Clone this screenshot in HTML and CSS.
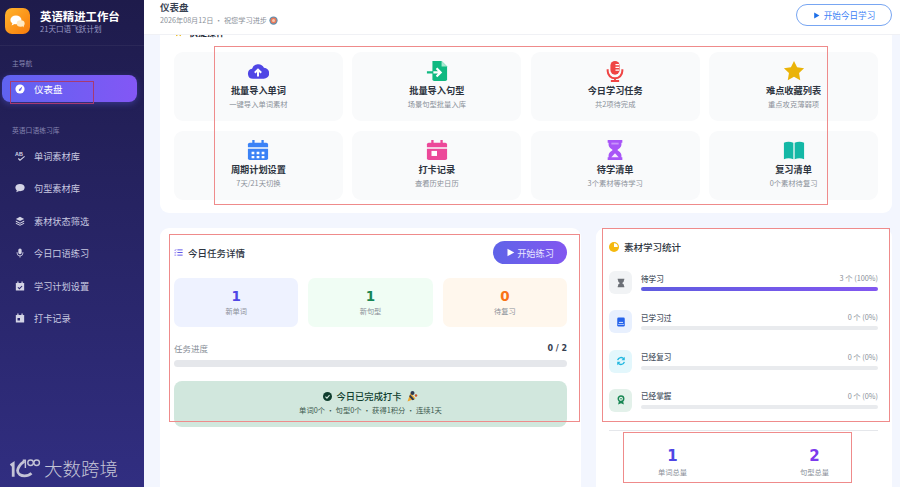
FILE: index.html
```html
<!DOCTYPE html>
<html lang="zh-CN">
<head>
<meta charset="utf-8">
<title>英语精进工作台</title>
<link rel="stylesheet" href="styles.css">
</head>
<body>
<aside class="sidebar">
  <div class="brand">
    <div class="logo">
      <svg viewBox="0 0 24 24" class="logo-svg"><ellipse cx="10" cy="10" rx="7" ry="5.6" fill="#fff"/><path d="M6 13l-1.500 4 5-2.500z" fill="#fff"/><ellipse cx="16" cy="14.500" rx="5" ry="4" fill="#ffe9c4"/><path d="M18 17l2 2.500-.2-4z" fill="#ffe9c4"/></svg>
    </div>
    <div class="brand-text">
      <div class="brand-title">英语精进工作台</div>
      <div class="brand-sub">21天口语飞跃计划</div>
    </div>
  </div>
  <div class="nav-label first">主导航</div>
  <a class="nav-item active">
    <svg viewBox="0 0 24 24" class="nav-icon"><circle cx="12" cy="12" r="11" fill="#fff"/><path d="M17.500 6l-3 9-4-3z" fill="#6a60f2"/><circle cx="11.500" cy="14.500" r="2.300" fill="#6a60f2"/></svg>
    <span>仪表盘</span>
  </a>
  <div class="nav-label second">英语口语练习库</div>
  <nav class="nav-list">
    <a class="nav-item">
      <svg viewBox="0 0 24 24" class="nav-icon"><text x="0" y="11" class="ab-text">AB</text><path d="M8 18l4 4 11-9" fill="none" stroke="currentColor" stroke-width="2.600"/></svg>
      <span>单词素材库</span>
    </a>
    <a class="nav-item">
      <svg viewBox="0 0 24 24" class="nav-icon"><ellipse cx="12" cy="11" rx="11" ry="8.500" fill="currentColor"/><path d="M5 16l-2 6 7-3z" fill="currentColor"/></svg>
      <span>句型素材库</span>
    </a>
    <a class="nav-item">
      <svg viewBox="0 0 24 24" class="nav-icon"><path d="M12 2l10 5-10 5L2 7z" fill="currentColor"/><path d="M2 11l10 5 10-5v2.500l-10 5-10-5z" fill="currentColor"/><path d="M2 16l10 5 10-5v2.500l-10 5-10-5z" fill="currentColor"/></svg>
      <span>素材状态筛选</span>
    </a>
    <a class="nav-item">
      <svg viewBox="0 0 24 24" class="nav-icon"><rect x="8" y="1" width="8" height="14" rx="4" fill="currentColor"/><path d="M5 10v2a7 7 0 0 0 14 0v-2M12 19v4" fill="none" stroke="currentColor" stroke-width="2"/></svg>
      <span>今日口语练习</span>
    </a>
    <a class="nav-item">
      <svg viewBox="0 0 24 24" class="nav-icon"><path d="M3 5h18a1 1 0 0 1 1 1v16a1 1 0 0 1-1 1H3a1 1 0 0 1-1-1V6a1 1 0 0 1 1-1z" fill="currentColor"/><path d="M7 1v6M17 1v6" stroke="currentColor" stroke-width="3"/><path d="M7 15l3.500 3.500L17 12" fill="none" stroke="#2a2570" stroke-width="2.500"/></svg>
      <span>学习计划设置</span>
    </a>
    <a class="nav-item">
      <svg viewBox="0 0 24 24" class="nav-icon"><path d="M3 5h18a1 1 0 0 1 1 1v16a1 1 0 0 1-1 1H3a1 1 0 0 1-1-1V6a1 1 0 0 1 1-1z" fill="currentColor"/><path d="M7 1v6M17 1v6" stroke="currentColor" stroke-width="3"/><rect x="6" y="12" width="6" height="6" fill="#2a2570"/></svg>
      <span>打卡记录</span>
    </a>
  </nav>
</aside>

<div class="main">
  <header class="topbar">
    <div>
      <div class="page-title">仪表盘</div>
      <div class="page-sub">2026年08月12日 · 祝您学习进步
        <svg viewBox="0 0 24 24" class="target"><circle cx="12" cy="12" r="11" fill="#5b8fb0"/><circle cx="12" cy="12" r="8" fill="#e8795a"/><circle cx="12" cy="12" r="4" fill="#f3c9b0"/></svg>
      </div>
    </div>
    <button class="btn-outline"><svg viewBox="0 0 24 24" class="btn-play"><path d="M4 2l18 10L4 22z" fill="currentColor"/></svg>开始今日学习</button>
  </header>

  <div class="content">
    <section class="card quick">
      <div class="quick-head">
        <svg viewBox="0 0 24 24" class="quick-star"><path d="M12 1l3.400 7 7.600 1-5.500 5.300 1.300 7.700-6.800-3.700L5.200 22l1.300-7.700L1 9l7.600-1z" fill="#eab308"/></svg>
        <span>快捷操作</span>
      </div>
      <div class="tiles">
        <div class="tile">
          <svg viewBox="0 0 24 24" class="tile-icon"><path d="M6.500 20.500a5.500 5.500 0 0 1-1-10.900A7 7 0 0 1 18.500 8.500 6 6 0 0 1 18 20.500z" fill="#4f46e5"/><path d="M12 18v-7M8.500 14l3.500-3.500 3.500 3.500" fill="none" stroke="#fff" stroke-width="2.200"/></svg>
          <div class="tile-title">批量导入单词</div>
          <div class="tile-sub">一键导入单词素材</div>
        </div>
        <div class="tile">
          <svg viewBox="0 0 24 24" class="tile-icon"><path d="M7 1h10l6 6v14a2 2 0 0 1-2 2H9a2 2 0 0 1-2-2z" fill="#10b981"/><path d="M17 1v6h6z" fill="#a7e9d0"/><path d="M1 13.500h15M11.500 9l4.500 4.500-4.500 4.500" fill="none" stroke="#10b981" stroke-width="2.400"/><path d="M8 13.500h8M11.500 9l4.500 4.500-4.500 4.500" fill="none" stroke="#fff" stroke-width="2.400"/></svg>
          <div class="tile-title">批量导入句型</div>
          <div class="tile-sub">场景句型批量入库</div>
        </div>
        <div class="tile">
          <svg viewBox="0 0 24 24" class="tile-icon"><rect x="7" y="1" width="10" height="15" rx="5" fill="#ef4444"/><path d="M4 10v2a8 8 0 0 0 16 0v-2M12 20v3M7.500 23h9" fill="none" stroke="#ef4444" stroke-width="2.200"/><path d="M12.500 5h4M12.500 8h4M12.500 11h4" stroke="#fff" stroke-width="1.200"/></svg>
          <div class="tile-title">今日学习任务</div>
          <div class="tile-sub">共2项待完成</div>
        </div>
        <div class="tile">
          <svg viewBox="0 0 24 24" class="tile-icon"><path d="M12 1l3.400 7 7.600 1-5.500 5.300 1.300 7.700-6.800-3.700L5.200 22l1.300-7.700L1 9l7.600-1z" fill="#eab308"/></svg>
          <div class="tile-title">难点收藏列表</div>
          <div class="tile-sub">重点攻克薄弱项</div>
        </div>
        <div class="tile">
          <svg viewBox="0 0 24 24" class="tile-icon"><path d="M3 4h18a2 2 0 0 1 2 2v3H1V6a2 2 0 0 1 2-2z" fill="#3b82f6"/><path d="M7 1v5M17 1v5" stroke="#3b82f6" stroke-width="2.500"/><path d="M1 10.500h22V21a2 2 0 0 1-2 2H3a2 2 0 0 1-2-2z" fill="#3b82f6"/><path d="M5 14h3v2.500H5zM10.500 14h3v2.500h-3zM16 14h3v2.500h-3zM5 18.500h3V21H5zM10.500 18.500h3V21h-3zM16 18.500h3V21h-3z" fill="#fff"/></svg>
          <div class="tile-title">周期计划设置</div>
          <div class="tile-sub">7天/21天切换</div>
        </div>
        <div class="tile">
          <svg viewBox="0 0 24 24" class="tile-icon"><path d="M3 4h18a2 2 0 0 1 2 2v3H1V6a2 2 0 0 1 2-2z" fill="#ec4899"/><path d="M7 1v5M17 1v5" stroke="#ec4899" stroke-width="2.500"/><path d="M1 10.500h22V21a2 2 0 0 1-2 2H3a2 2 0 0 1-2-2z" fill="#ec4899"/><rect x="6" y="13" width="6" height="5.500" fill="#fff"/></svg>
          <div class="tile-title">打卡记录</div>
          <div class="tile-sub">查看历史日历</div>
        </div>
        <div class="tile">
          <svg viewBox="0 0 24 24" class="tile-icon"><path d="M4 1h16v3h-1v2.500c0 2.500-3 4.200-4.500 5.500 1.500 1.300 4.500 3 4.500 5.500V20h1v3H4v-3h1v-2.500C5 15 8 13.300 9.500 12 8 10.700 5 9 5 6.500V4H4z" fill="#a855f7"/><path d="M8 20l4-4.500 4 4.500z" fill="#f5e9ff"/><path d="M8 4h8v2H8z" fill="#c994fb"/></svg>
          <div class="tile-title">待学清单</div>
          <div class="tile-sub">3个素材等待学习</div>
        </div>
        <div class="tile">
          <svg viewBox="0 0 24 24" class="tile-icon"><path d="M1 4c3-1.500 7-1.500 10.300 0v18C8 20.500 4 20.500 1 22z" fill="#14b8a6"/><path d="M23 4c-3-1.500-7-1.500-10.300 0v18c3.300-1.500 7.300-1.500 10.300 0z" fill="#14b8a6"/></svg>
          <div class="tile-title">复习清单</div>
          <div class="tile-sub">0个素材待复习</div>
        </div>
      </div>
    </section>

    <div class="columns">
      <section class="card tasks">
        <div class="task-head">
          <div class="card-title">
            <svg viewBox="0 0 24 24" class="title-icon"><path d="M9 5h14M9 12h14M9 19h14" stroke="#4f46e5" stroke-width="2.400"/><path d="M1 5l2 2 3-4M1 12l2 2 3-4M1 19h5" fill="none" stroke="#7c5cf0" stroke-width="2"/></svg>
            <span>今日任务详情</span>
          </div>
          <button class="btn-primary"><svg viewBox="0 0 24 24" class="btn-play-lg"><path d="M4 2l18 10L4 22z" fill="currentColor"/></svg>开始练习</button>
        </div>
        <div class="stat-row">
          <div class="stat stat-blue"><div class="stat-num">1</div><div class="stat-label">新单词</div></div>
          <div class="stat stat-green"><div class="stat-num">1</div><div class="stat-label">新句型</div></div>
          <div class="stat stat-orange"><div class="stat-num">0</div><div class="stat-label">待复习</div></div>
        </div>
        <div class="progress-head"><span>任务进度</span><b>0 / 2</b></div>
        <div class="progress-track"></div>
        <div class="checkin">
          <div class="checkin-title">
            <svg viewBox="0 0 24 24" class="check-icon"><circle cx="12" cy="12" r="12" fill="#0f3d2e"/><path d="M6.500 12.500l4 4 7-8" fill="none" stroke="#d1e7dd" stroke-width="3"/></svg>
            <span>今日已完成打卡</span>
            <svg viewBox="0 0 24 24" class="party-icon"><path d="M3 23L9 6l10 11z" fill="#eda72f"/><path d="M8 9l9 10-4 1.500-6.500-7z" fill="#2f3a52"/><circle cx="13" cy="6" r="4" fill="#2f3a52"/><circle cx="20" cy="11" r="2.500" fill="#c8552d"/></svg>
          </div>
          <div class="checkin-sub">单词0个 · 句型0个 · 获得1积分 · 连续1天</div>
        </div>
      </section>

      <section class="card stats">
        <div class="card-title">
          <svg viewBox="0 0 24 24" class="title-icon"><circle cx="12" cy="12" r="12" fill="#f5b90f"/><path d="M12 12V3a9 9 0 0 1 9 9z" fill="#fff"/></svg>
          <span>素材学习统计</span>
        </div>
        <div class="stat-list">
          <div class="row">
            <div class="row-icon ri-gray"><svg viewBox="0 0 24 24" class="ri-svg"><path d="M4 2h16v2h-1v3c0 2-3 4-4.500 5 1.500 1 4.500 3 4.500 5v3h1v2H4v-2h1v-3c0-2 3-4 4.500-5C8 11 5 9 5 7V4H4z" fill="#6b6f76"/></svg></div>
            <div class="row-body">
              <div class="row-text"><span class="row-name">待学习</span><span class="row-val">3 个 (100%)</span></div>
              <div class="bar"><div class="bar-fill"></div></div>
            </div>
          </div>
          <div class="row">
            <div class="row-icon ri-blue"><svg viewBox="0 0 24 24" class="ri-svg"><rect x="3" y="1" width="18" height="22" rx="3" fill="#2563eb"/><path d="M7 13h10" stroke="#fff" stroke-width="2"/><path d="M5 18h14" stroke="#bcd3fb" stroke-width="2"/></svg></div>
            <div class="row-body">
              <div class="row-text"><span class="row-name">已学习过</span><span class="row-val">0 个 (0%)</span></div>
              <div class="bar"></div>
            </div>
          </div>
          <div class="row">
            <div class="row-icon ri-cyan"><svg viewBox="0 0 24 24" class="ri-svg"><path d="M4 10a8.500 8.500 0 0 1 15-3M20 14a8.500 8.500 0 0 1-15 3" fill="none" stroke="#22b8e0" stroke-width="3.400"/><path d="M21 2v8h-8zM3 22v-8h8z" fill="#22b8e0"/></svg></div>
            <div class="row-body">
              <div class="row-text"><span class="row-name">已经复习</span><span class="row-val">0 个 (0%)</span></div>
              <div class="bar"></div>
            </div>
          </div>
          <div class="row">
            <div class="row-icon ri-green"><svg viewBox="0 0 24 24" class="ri-svg"><circle cx="12" cy="9" r="6.500" fill="none" stroke="#198754" stroke-width="3.600"/><path d="M7 15l-2 8 7-3 7 3-2-8z" fill="#198754"/><circle cx="12" cy="9" r="2" fill="#198754"/></svg></div>
            <div class="row-body">
              <div class="row-text"><span class="row-name">已经掌握</span><span class="row-val">0 个 (0%)</span></div>
              <div class="bar"></div>
            </div>
          </div>
        </div>
        <div class="totals">
          <div class="total"><div class="total-num num-indigo">1</div><div class="total-label">单词总量</div></div>
          <div class="total"><div class="total-num num-purple">2</div><div class="total-label">句型总量</div></div>
        </div>
      </section>
    </div>
  </div>
</div>

<div class="mark mark-side"></div>
<div class="mark mark-quick"></div>
<div class="mark mark-tasks"></div>
<div class="mark mark-stats"></div>
<div class="mark mark-totals"></div>

<div class="watermark">
  <svg viewBox="0 0 38 24" class="wm-logo"><path d="M3 9l3-2v15" fill="none" stroke="currentColor" stroke-width="3.200"/><path d="M19 4C13 8 11 13 11 15c0 4 4 6 8 6 3 0 6-1 8-3" fill="none" stroke="currentColor" stroke-width="3.200"/><circle cx="26" cy="6" r="3.200" fill="none" stroke="currentColor" stroke-width="1.600"/><circle cx="33" cy="6" r="3.200" fill="none" stroke="currentColor" stroke-width="1.600"/><path d="M17 3h3v9" fill="none" stroke="currentColor" stroke-width="1.600"/></svg>
  <span>大数跨境</span>
</div>
</body>
</html>
```
FILE: styles.css
```css
* { box-sizing: border-box; }
html, body { margin: 0; height: 100%; }
body {
  display: flex;
  height: 487px;
  overflow: hidden;
  position: relative;
  background: #f3f6fe;
  color: #1f2937;
  font-family: "Noto Sans CJK SC", "Noto Sans", sans-serif;
}
button { font-family: inherit; cursor: pointer; }

.sidebar {
  width: 144px;
  flex: none;
  background: linear-gradient(180deg, #1e1b4b 0%, #312e81 100%);
  color: #c9c9e0;
}
.brand {
  display: flex;
  gap: 10px;
  height: 46px;
  padding: 8px 0 0 5px;
  border-bottom: 1px solid rgba(255, 255, 255, .05);
}
.logo {
  width: 25px;
  height: 26px;
  border-radius: 7px;
  background: linear-gradient(135deg, #ffb52e, #f97b0b);
  display: flex;
  align-items: center;
  justify-content: center;
}
.logo-svg { width: 19px; height: 19px; }
.brand-title { font-size: 11.4px; line-height: 14px; font-weight: 700; color: #fff; margin-top: 1px; }
.brand-sub { font-size: 7.6px; line-height: 11px; color: #9a9ac4; }
.nav-label { font-size: 6.8px; line-height: 10px; color: #8585b0; padding-left: 12px; }
.nav-label.first { margin-top: 12px; }
.nav-label.second { margin-top: 23px; }
.nav-item {
  display: flex;
  align-items: center;
  gap: 9px;
  height: 27px;
  margin: 7px 7px 0 2px;
  padding-left: 13px;
  font-size: 9.2px;
  color: #c9c9e0;
  border-radius: 8px;
}
.nav-item.active {
  background: linear-gradient(90deg, #5f63f0, #8357f5);
  color: #fff;
  font-size: 9.5px;
  box-shadow: 0 2px 6px rgba(99, 102, 241, .35);
}
.nav-list { display: flex; flex-direction: column; gap: 5.4px; margin-top: 7.500px; }
.nav-list .nav-item { margin-top: 0; }
.nav-icon { width: 10px; height: 10px; flex: none; color: #d4d4e6; overflow: visible; }
.ab-text { font-family: "Liberation Sans", sans-serif; font-size: 13px; font-weight: 700; fill: currentColor; }

.main { flex: 1; min-width: 0; display: flex; flex-direction: column; height: 487px; }
.topbar {
  position: relative;
  z-index: 2;
  flex: none;
  height: 35px;
  background: #fff;
  padding: 0 8px 0 16px;
  display: flex;
  justify-content: space-between;
  border-bottom: 1px solid #f0f1f5;
}
.page-title { font-size: 9.5px; line-height: 13px; font-weight: 700; color: #374151; margin-top: 1px; }
.page-sub { font-size: 7.2px; line-height: 11px; color: #8a9099; margin-top: 1px; display: flex; align-items: center; gap: 2px; }
.target { width: 9px; height: 9px; }
.btn-outline {
  align-self: flex-start;
  margin-top: 4px;
  width: 96px;
  height: 22px;
  border: 1px solid #78a6f2;
  border-radius: 11px;
  background: #fff;
  color: #3b82f6;
  font-size: 8.6px;
  display: flex;
  align-items: center;
  justify-content: center;
  gap: 4px;
  padding: 0;
}
.btn-play { width: 7px; height: 7px; color: #1d6fe8; }

.content { flex: 1; min-height: 0; padding: 0 8px 0 16px; overflow: hidden; }
.card { background: #fff; border-radius: 9px; }
.quick { margin-top: -23px; padding: 14px; height: 201px; }
.quick-head { display: flex; align-items: center; gap: 6px; height: 13px; margin-bottom: 13px; font-size: 9px; font-weight: 700; }
.quick-star { width: 9px; height: 9px; }
.tiles { display: grid; grid-template-columns: repeat(4, 1fr); gap: 10px 9.500px; }
.tile {
  height: 69px;
  background: #f9fafb;
  border-radius: 9px;
  display: flex;
  flex-direction: column;
  align-items: center;
  padding-top: 8px;
}
.tile-icon { width: 22px; height: 22px; display: block; }
.tile-title { font-size: 9.2px; line-height: 13px; font-weight: 700; color: #2d3440; margin-top: 2px; }
.tile-sub { font-size: 7.3px; line-height: 11px; color: #8a9099; margin-top: 2px; }

.columns { display: grid; grid-template-columns: 421px 296px; gap: 15px; margin-top: 15px; }
.tasks { padding: 13px 14px 0; height: 280px; }
.task-head { display: flex; align-items: center; justify-content: space-between; height: 23px; }
.card-title { display: flex; align-items: center; gap: 5px; font-size: 9.5px; line-height: 14px; font-weight: 500; color: #2d3440; }
.title-icon { width: 9px; height: 9px; flex: none; }
.btn-primary {
  width: 74px;
  height: 23px;
  border: 0;
  border-radius: 12px;
  background: linear-gradient(90deg, #5f63e8, #8257f0);
  color: #e9e6ff;
  font-size: 9.2px;
  display: flex;
  align-items: center;
  justify-content: center;
  gap: 2px;
  padding: 0;
}
.btn-play-lg { width: 9px; height: 9px; color: #fff; }
.stat-row { display: grid; grid-template-columns: repeat(3, 1fr); gap: 10px; margin-top: 14px; }
.stat { height: 49px; border-radius: 7px; text-align: center; padding-top: 9px; }
.stat-blue { background: #eef2ff; }
.stat-green { background: #f0fdf4; }
.stat-orange { background: #fff7ed; }
.stat-num { font-family: "DejaVu Sans", sans-serif; font-size: 13.5px; line-height: 18px; font-weight: 700; }
.stat-blue .stat-num { color: #4f46e5; }
.stat-green .stat-num { color: #198754; }
.stat-orange .stat-num { color: #f97316; }
.stat-label { font-size: 7.2px; line-height: 11px; color: #8a9099; margin-top: 1px; }
.progress-head { display: flex; justify-content: space-between; align-items: center; margin-top: 14px; height: 14px; font-size: 8.5px; color: #8a9099; }
.progress-head b { font-family: "DejaVu Sans", sans-serif; font-size: 8px; color: #374151; }
.progress-track { height: 7px; margin-top: 5px; background: #e5e7eb; border-radius: 4px; }
.checkin {
  margin-top: 14px;
  height: 46px;
  background: #d1e7dd;
  border-radius: 8px;
  text-align: center;
  padding-top: 8px;
}
.checkin-title { display: flex; align-items: center; justify-content: center; gap: 4px; font-size: 9.3px; line-height: 14px; font-weight: 500; color: #0f3d2e; }
.check-icon { width: 9px; height: 9px; }
.party-icon { width: 12px; height: 12px; }
.checkin-sub { font-size: 7.3px; line-height: 11px; color: #3d5a4e; margin-top: 2px; }

.stats { padding: 12px 14px 0 13px; height: 280px; }
.stats .title-icon { width: 10px; height: 10px; }
.stat-list { display: flex; flex-direction: column; gap: 16.300px; margin-top: 17px; }
.row { display: flex; gap: 9px; height: 23px; }
.row-icon { width: 23px; height: 23px; border-radius: 6px; display: flex; align-items: center; justify-content: center; flex: none; }
.ri-gray { background: #f1f3f5; }
.ri-blue { background: #e8f0fe; }
.ri-cyan { background: #e3f7fc; }
.ri-green { background: #e3f1ea; }
.ri-svg { width: 10px; height: 10px; }
.row-body { flex: 1; }
.row-text { display: flex; justify-content: space-between; height: 14px; align-items: center; }
.row-name { font-size: 7.6px; color: #4b5563; font-weight: 500; }
.row-val { font-size: 7.3px; color: #8a9099; }
.bar { height: 4px; margin-top: 2px; background: #e9ebee; border-radius: 2px; overflow: hidden; }
.bar-fill { height: 100%; width: 100%; background: linear-gradient(90deg, #5f5ce0, #8257f0); }
.totals {
  display: grid;
  grid-template-columns: 142px 142px;
  justify-content: center;
  margin-top: 18px;
  border-top: 1px solid #e5e7eb;
  padding-top: 14px;
  text-align: center;
}
.total-num { font-family: "DejaVu Sans", sans-serif; font-size: 15px; line-height: 22px; font-weight: 700; }
.num-indigo { color: #4f46e5; }
.num-purple { color: #7c3aed; }
.total-label { font-size: 7.3px; line-height: 11px; color: #8a9099; }

.mark { position: absolute; border: 1px solid #ef8b8b; z-index: 5; pointer-events: none; }
.mark-side { left: 10px; top: 81px; width: 84px; height: 23px; border-color: #a63a72; }
.mark-quick { left: 214px; top: 46px; width: 614px; height: 159px; }
.mark-tasks { left: 169px; top: 234px; width: 411px; height: 188px; }
.mark-stats { left: 602px; top: 228px; width: 288px; height: 194px; }
.mark-totals { left: 623px; top: 432px; width: 229px; height: 51px; }

.watermark {
  position: absolute;
  left: 8px;
  top: 456px;
  z-index: 6;
  display: flex;
  align-items: center;
  gap: 3px;
  color: #c4c4d6;
  font-size: 18.500px;
  line-height: 24px;
  font-weight: 300;
}
.wm-logo { width: 33px; height: 22px; }
```
